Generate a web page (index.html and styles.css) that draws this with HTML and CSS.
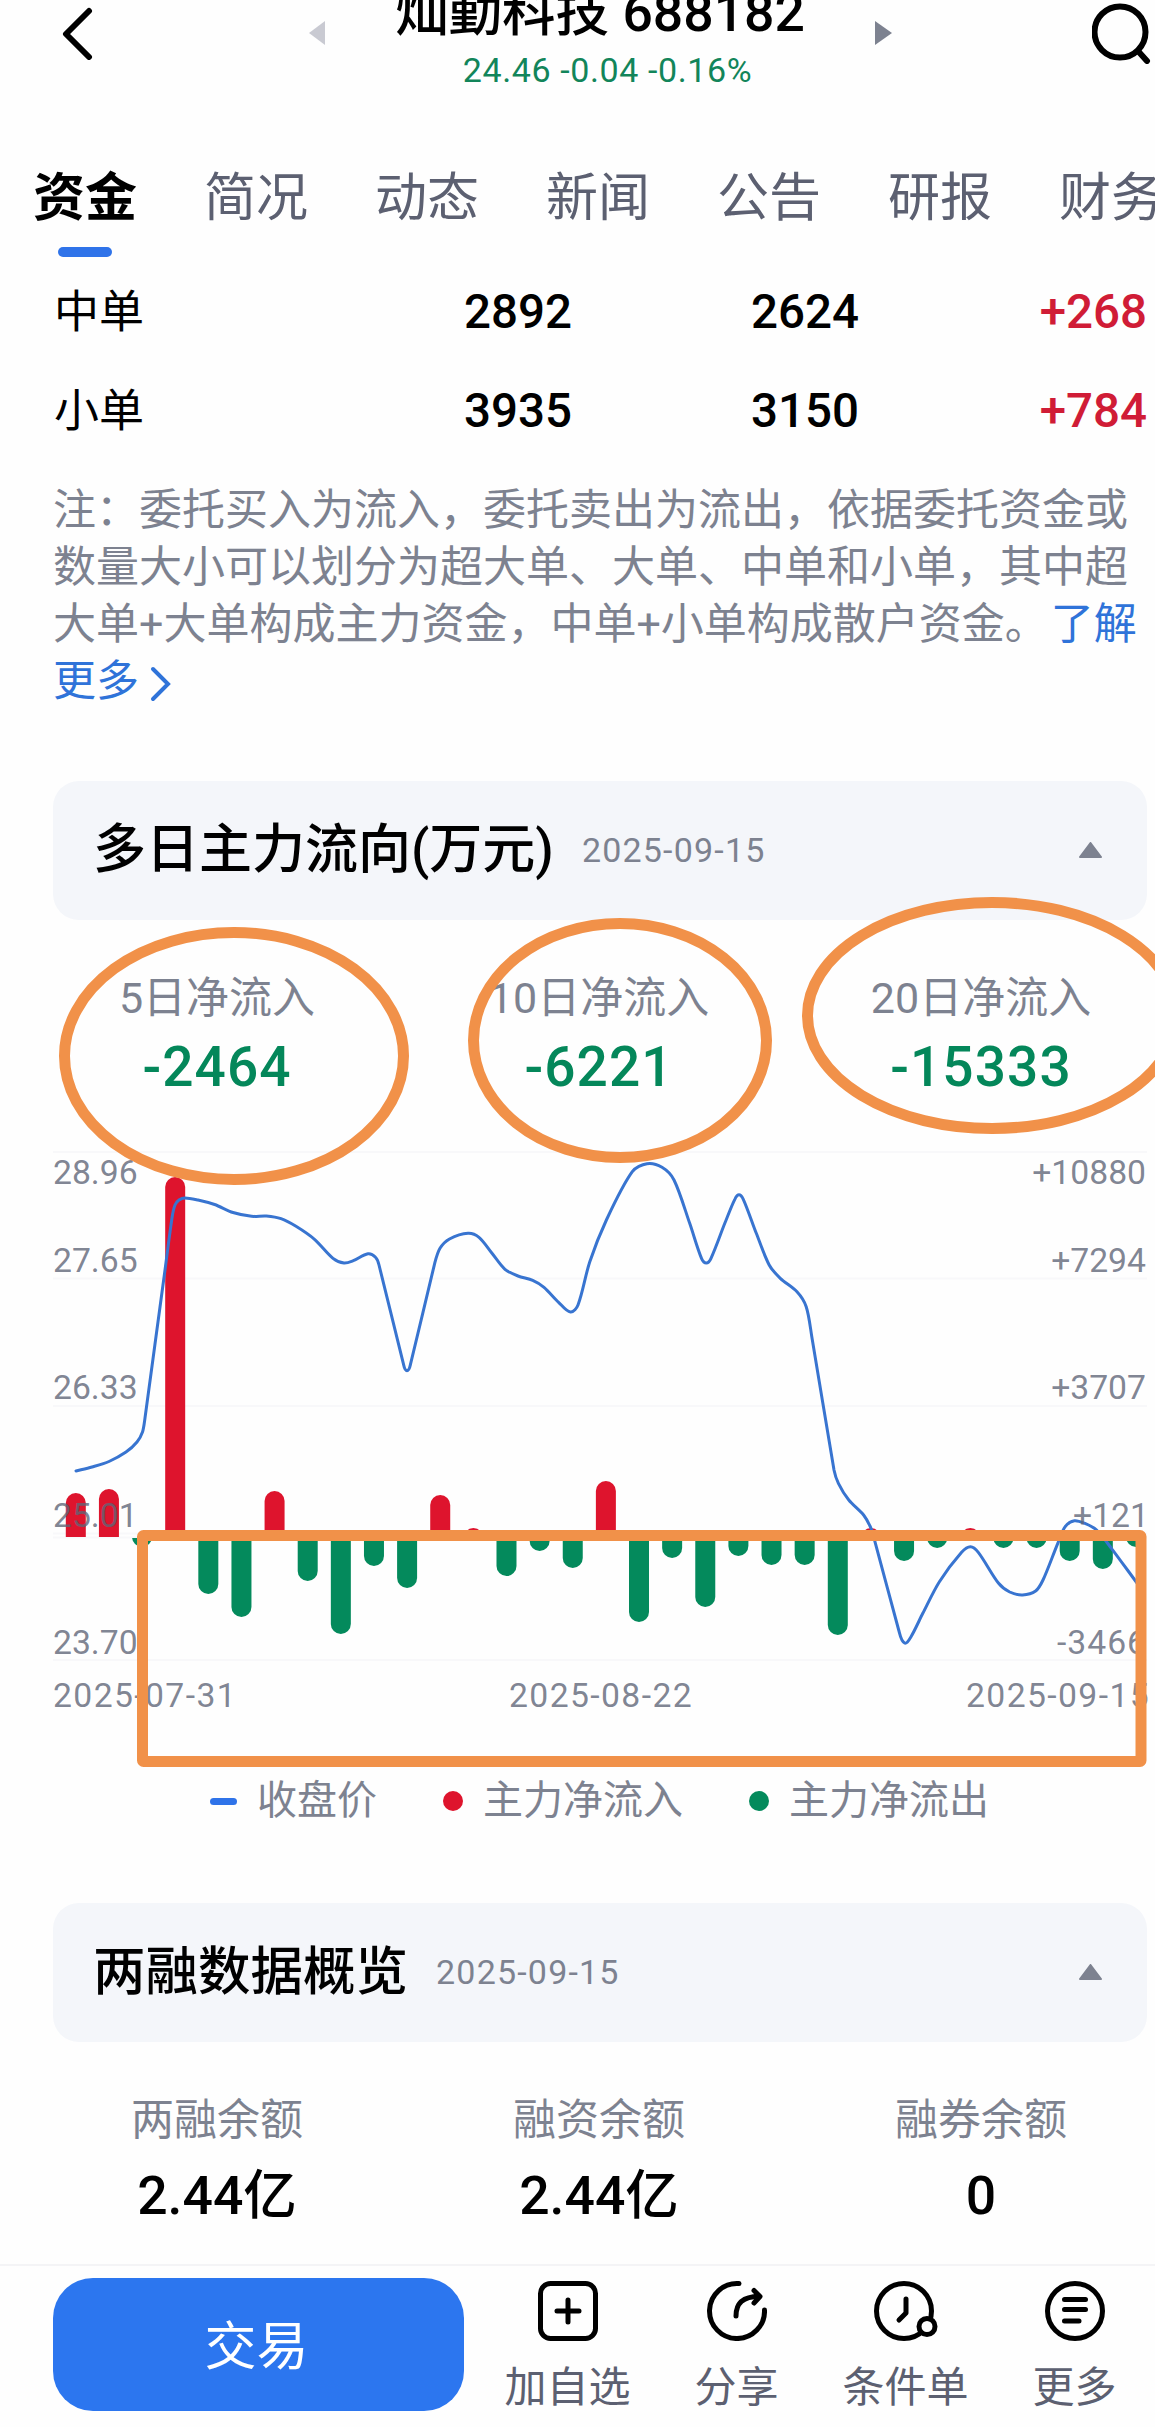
FILE: index.html
```html
<!DOCTYPE html>
<html lang="zh-CN">
<head>
    <meta charset="utf-8" />
    <title>灿勤科技 688182</title>
    <link rel="stylesheet" href="styles.css">
</head>
<body>
    <header class="topbar">
        <svg class="back" width="36" height="60" viewBox="0 0 36 60"><path d="M30 11 L7 34 L30 57" /></svg>
        <svg class="prev" width="16" height="24" viewBox="0 0 16 24"><path d="M16 0 V24 L0 12 Z" /></svg>
        <div class="stock">
            <h1>灿勤科技 688182</h1>
            <p>24.46 -0.04 -0.16%</p>
        </div>
        <svg class="next" width="17" height="24" viewBox="0 0 17 24"><path d="M0 0 V24 L17 12 Z" /></svg>
        <svg class="search" width="63" height="64" viewBox="0 0 63 64"><circle cx="28" cy="32" r="25.5" /><path d="M46 51 L55 61" /></svg>
    </header>

    <nav class="tabs">
        <a class="active">资金</a>
        <a>简况</a>
        <a>动态</a>
        <a>新闻</a>
        <a>公告</a>
        <a>研报</a>
        <a>财务</a>
    </nav>

    <main>
        <div class="orders">
            <div class="row"><span>中单</span><b>2892</b><b>2624</b><b class="up">+268</b></div>
            <div class="row"><span>小单</span><b>3935</b><b>3150</b><b class="up">+784</b></div>
        </div>

        <p class="note">注：委托买入为流入，委托卖出为流出，依据委托资金或<br>数量大小可以划分为超大单、大单、中单和小单，其中超<br>大单+大单构成主力资金，中单+小单构成散户资金。<a>了解<br>更多<svg width="22" height="36" viewBox="0 0 22 36"><path d="M3 3 L18 18 L3 33" /></svg></a></p>

        <section class="card-head">
            <h2>多日主力流向(万元)</h2>
            <time>2025-09-15</time>
            <svg width="23" height="16" viewBox="0 0 23 16"><path d="M11.5 1 L22 15 H1 Z" /></svg>
        </section>

        <div class="stats flow">
            <div><span>5日净流入</span><b>-2464</b></div>
            <div><span>10日净流入</span><b>-6221</b></div>
            <div><span>20日净流入</span><b>-15333</b></div>
        </div>

        <svg class="chart" width="1155" height="600" viewBox="0 1130 1155 600">
            <defs>
                <clipPath id="above"><rect x="0" y="1130" width="1155" height="407" /></clipPath>
                <clipPath id="below"><rect x="0" y="1538" width="1155" height="192" /></clipPath>
            </defs>
            <path class="grid" d="M53 1152H1147 M53 1278.5H1147 M53 1406H1147 M53 1533.5H1147 M53 1537.5H1147 M53 1660H1147" />
            <g id="inflow" class="inflow" clip-path="url(#above)"></g>
            <g id="outflow" class="outflow" clip-path="url(#below)"></g>
            <path id="price" class="price" />
            <g class="axis">
                <text x="53" y="1184">28.96</text>
                <text x="53" y="1272">27.65</text>
                <text x="53" y="1399">26.33</text>
                <text x="53" y="1527">25.01</text>
                <text x="53" y="1654">23.70</text>
            </g>
            <g class="axis end">
                <text x="1146" y="1184">+10880</text>
                <text x="1146" y="1272">+7294</text>
                <text x="1146" y="1399">+3707</text>
                <text x="1149" y="1527">+121</text>
                <text x="1146" y="1654" textLength="89">-3466</text>
            </g>
            <g class="axis dates">
                <text x="53" y="1707">2025-07-31</text>
                <text x="509" y="1707">2025-08-22</text>
                <text x="966" y="1707">2025-09-15</text>
            </g>
        </svg>

        <div class="legend">
            <span><i class="dash"></i>收盘价</span>
            <span><i class="dot red"></i>主力净流入</span>
            <span><i class="dot green"></i>主力净流出</span>
        </div>

        <section class="card-head second">
            <h2>两融数据概览</h2>
            <time>2025-09-15</time>
            <svg width="23" height="16" viewBox="0 0 23 16"><path d="M11.5 1 L22 15 H1 Z" /></svg>
        </section>

        <div class="stats margin">
            <div><span>两融余额</span><b>2.44亿</b></div>
            <div><span>融资余额</span><b>2.44亿</b></div>
            <div><span>融券余额</span><b>0</b></div>
        </div>
    </main>

    <footer class="bottombar">
        <button>交易</button>
        <a>
            <svg width="60" height="60" viewBox="0 0 60 60"><rect x="2.5" y="2.5" width="55" height="55" rx="10" /><path d="M30 19V41M19 30H41" /></svg>
            加自选
        </a>
        <a>
            <svg width="60" height="60" viewBox="0 0 60 60"><path d="M32 2.6A27.5 27.5 0 1 0 57.5 29M29 35C29 22 36 15.5 52 15.5M47 9.5L53 15.5L47 22" /></svg>
            分享
        </a>
        <a>
            <svg width="64" height="60" viewBox="0 0 64 60"><circle cx="30" cy="30" r="27.5" /><path d="M32 18V32L25 39" /><circle class="knob" cx="53" cy="45.5" r="8" /></svg>
            条件单
        </a>
        <a>
            <svg width="60" height="60" viewBox="0 0 60 60"><circle cx="30" cy="30" r="27.5" /><path d="M19.5 18.5H40.5M19.5 28.5H40.5M19.5 40H34" /></svg>
            更多
        </a>
    </footer>

    <!-- hand-drawn marks over the page -->
    <svg class="marks" width="1155" height="2427" viewBox="0 0 1155 2427">
        <ellipse cx="234" cy="1056" rx="169.5" ry="123.5" />
        <ellipse cx="620" cy="1040.5" rx="146.5" ry="117" />
        <ellipse cx="992" cy="1015.5" rx="184.5" ry="113" />
        <rect x="142.5" y="1535.5" width="998.5" height="226" rx="1" />
    </svg>

    <script src="chart.js"></script>
</body>
</html>
```

FILE: styles.css
```css
* {
    box-sizing: border-box;
}
body {
    margin: 0;
    width: 1155px;
    height: 2427px;
    overflow: hidden;
    position: relative;
    background: #fefefe;
    color: #000;
    font-family: Roboto, "Noto Sans CJK SC", sans-serif;
}
h1, h2, p {
    margin: 0;
}
svg {
    display: block;
    flex: none;
}

.topbar {
    display: flex;
    align-items: flex-start;
    height: 130px;
    padding-left: 59px;
    overflow: hidden;
}
.back, .search {
    fill: none;
    stroke: #000;
    stroke-width: 6;
    stroke-linecap: round;
    stroke-linejoin: round;
}
.prev {
    margin: 21px 0 0 214px;
    fill: #c9cad2;
}
.next {
    margin-top: 21px;
    fill: #7d8290;
}
.search {
    margin-left: 200px;
}
.stock {
    width: 550px;
    text-align: center;
    white-space: nowrap;
}
.stock h1 {
    margin-top: -17px;
    font-size: 53.5px;
    font-weight: 500;
    line-height: 60px;
}
.stock p {
    margin-top: 7px;
    padding-left: 15px;
    font-size: 34px;
    line-height: 40px;
    letter-spacing: 0.6px;
    color: #12855a;
}

.tabs {
    display: flex;
    gap: 67px;
    height: 127px;
    padding: 39px 0 0 33px;
    font-size: 52px;
    line-height: 60px;
    color: #5c6071;
    white-space: nowrap;
}
.tabs a {
    flex: none;
}
.tabs .active {
    color: #000;
    font-weight: 700;
}
.tabs .active::after {
    content: "";
    display: block;
    width: 54px;
    height: 10px;
    margin: 18px auto 0;
    border-radius: 5px;
    background: #2f73e9;
}

.orders {
    padding: 6px 8px 0 54px;
}
.orders .row {
    display: grid;
    grid-template-columns: 230px 288px 287px 288px;
    height: 99px;
    line-height: 98px;
    font-size: 45px;
    text-align: right;
}
.orders span {
    text-align: left;
    line-height: 100px;
}
.orders b {
    font-size: 47.5px;
    font-weight: 500;
}
.up {
    color: #d01c36;
}

.note {
    margin: 21px 0 0 53px;
    font-size: 43px;
    line-height: 57px;
    color: #7d8290;
    white-space: nowrap;
}
.note a {
    margin-left: 3px;
    color: #2f73d9;
}
.note svg {
    display: inline-block;
    vertical-align: -6px;
    margin-left: 11px;
    fill: none;
    stroke: #2f73d9;
    stroke-width: 4;
    stroke-linecap: round;
}

.card-head {
    display: flex;
    align-items: center;
    height: 139px;
    margin: 71px 8px 0 53px;
    padding: 0 45px 2px 40px;
    border-radius: 26px;
    background: #f4f6fa;
}
.card-head h2 {
    font-size: 53px;
    font-weight: 500;
    line-height: 60px;
}
.card-head time {
    margin-left: 28px;
    font-size: 34px;
    letter-spacing: 1.2px;
    color: #7d8290;
}
.card-head svg {
    margin-left: auto;
    fill: #7d8290;
    stroke: #7d8290;
    stroke-width: 2;
    stroke-linejoin: round;
}

.stats {
    display: grid;
    grid-template-columns: repeat(3, 382px);
    margin-left: 26px;
    text-align: center;
}
.stats span, .stats b {
    display: block;
}
.stats span {
    font-size: 43px;
    line-height: 60px;
    color: #7d8290;
}
.stats b {
    margin-top: 8px;
    font-size: 55px;
    font-weight: 500;
    line-height: 60px;
}
.flow {
    height: 210px;
    padding-top: 48px;
}
.flow b {
    padding-top: 1px;
    color: #04875a;
    letter-spacing: 1.1px;
}
.margin {
    height: 222px;
    padding-top: 48px;
}
.margin b {
    margin-top: 16px;
    font-size: 53.5px;
}

.grid {
    stroke: #f8f8fa;
    stroke-width: 2;
}
.inflow {
    fill: #de142d;
}
.outflow {
    fill: #048a5c;
}
.price {
    fill: none;
    stroke: #3874d0;
    stroke-width: 3;
    stroke-linecap: round;
    stroke-linejoin: round;
}
.axis {
    fill: #5f6577;
    fill-opacity: 0.8;
    font-size: 33.7px;
}
.end {
    text-anchor: end;
}
.dates {
    letter-spacing: 1.4px;
}

.legend {
    display: flex;
    align-items: flex-start;
    height: 173px;
    padding: 41px 0 0 210px;
    font-size: 40px;
    line-height: 60px;
    color: #7d8290;
    white-space: nowrap;
}
.legend span {
    display: flex;
    align-items: center;
}
.legend i {
    display: block;
    border-radius: 10px;
}
.dash {
    width: 27px;
    height: 7px;
    margin-right: 20px;
    background: #2f73e9;
}
.dot {
    width: 20px;
    height: 20px;
    margin: 0 20px 0 66px;
}
.red {
    background: #de142d;
}
.green {
    background: #048a5c;
}
.second {
    margin-top: 0;
}
.second h2 {
    font-size: 52.5px;
}

.bottombar {
    display: flex;
    height: 163px;
    padding: 12px 0 0 53px;
    border-top: 2px solid #f4f4f6;
    color: #5c6071;
    font-size: 42px;
    line-height: 60px;
    white-space: nowrap;
}
.bottombar button {
    flex: none;
    width: 411px;
    height: 133px;
    margin-right: 19px;
    padding: 0 4px 5px 0;
    border: 0;
    border-radius: 40px;
    background: #2c76ef;
    color: #fff;
    font-family: inherit;
    font-size: 52px;
}
.bottombar a {
    display: flex;
    flex-direction: column;
    align-items: center;
    gap: 17px;
    flex: none;
    width: 169px;
    padding-top: 3px;
}
.bottombar svg {
    fill: none;
    stroke: #000;
    stroke-width: 5;
    stroke-linecap: round;
    stroke-linejoin: round;
}
.bottombar .knob {
    fill: #fefefe;
}

.marks {
    position: absolute;
    top: 0;
    left: 0;
    fill: none;
    stroke: #f19149;
    stroke-width: 11;
}
```

FILE: chart.js
```js
// end of each daily bar on the y axis; smaller than the zero line means inflow
const ZERO = 1537;
const bars = [
    1493, 1489, 1547, 1177, 1594, 1617, 1491, 1581, 1634, 1566, 1588,
    1495, 1528, 1576, 1551, 1568, 1481, 1622, 1558, 1607, 1556, 1565,
    1565, 1635, 1528, 1561, 1548, 1528, 1548, 1548, 1561, 1569, 1547
];

const price = [
    [76, 1471], [92, 1467], [109, 1461.5], [126, 1452], [137, 1442], [142.5, 1432], [145, 1418],
    [164.6, 1273], [172, 1218], [175, 1205], [179, 1200], [185, 1198], [198, 1200], [214.6, 1204.5],
    [233, 1212.5], [251.6, 1216.3], [266.4, 1216], [281, 1218.7], [296, 1226.3], [314.5, 1239.3],
    [333, 1258.3], [344, 1263], [353.3, 1260.7], [368, 1253.7], [375.5, 1257.3], [379, 1265],
    [403.3, 1363.3], [407, 1370.7], [410.7, 1363.3], [434.7, 1263.3], [440, 1248.3], [449.5, 1239],
    [468, 1233.3], [479, 1237.3], [492, 1253.3], [505, 1269.3], [518, 1276], [532.7, 1280.3],
    [544, 1287.3], [558.6, 1302.3], [570.5, 1312], [578, 1305], [589.8, 1261.7], [606.4, 1220],
    [632.3, 1171.7], [647, 1163.7], [662, 1167.3], [674, 1180], [689.7, 1223.3], [701.5, 1258.3],
    [706.3, 1263], [711, 1258.3], [724.8, 1223.3], [734.8, 1199.3], [739, 1194.7], [743.3, 1199.3],
    [756.3, 1233.3], [769.2, 1265], [780.3, 1278.3], [797, 1291.7], [806.2, 1306.7], [811.8, 1336.7],
    [834, 1470], [838.4, 1483.3], [848.8, 1500], [863.6, 1515], [871, 1528.3], [875.4, 1543.3],
    [898.7, 1630], [904.6, 1643], [911, 1636.7], [922.8, 1613.3], [939.4, 1581.7], [961.6, 1552.3],
    [970.5, 1546.7], [978.3, 1552.3], [998.6, 1583.3], [1009.7, 1592], [1022.6, 1595], [1035.6, 1591],
    [1043, 1580], [1057.8, 1543.3], [1065.2, 1526.7], [1074.4, 1520.7], [1085.5, 1523.7],
    [1096.6, 1530], [1111.4, 1548.3], [1137, 1583]
];

bars.forEach((end, i) => {
    const up = end < ZERO;
    const rect = document.createElementNS('http://www.w3.org/2000/svg', 'rect');
    rect.setAttribute('x', 75.8 + i * 33.13 - 10);
    rect.setAttribute('y', up ? end : ZERO - 30);
    rect.setAttribute('width', 20);
    rect.setAttribute('height', up ? ZERO + 30 - end : end - ZERO + 30);
    rect.setAttribute('rx', 10);
    document.getElementById(up ? 'inflow' : 'outflow').appendChild(rect);
});

// control points are scaled by segment length, so short bends don't overshoot
function smooth(pts) {
    const dist = (a, b) => Math.hypot(a[0] - b[0], a[1] - b[1]);
    const tangent = (i) => {
        const a = pts[Math.max(i - 1, 0)];
        const b = pts[Math.min(i + 1, pts.length - 1)];
        const len = dist(a, b);
        return [(b[0] - a[0]) / len, (b[1] - a[1]) / len];
    };
    let d = 'M' + pts[0].join(' ');
    for (let i = 0; i < pts.length - 1; i++) {
        const k = dist(pts[i], pts[i + 1]) * (dist(pts[i], pts[i + 1]) > 60 ? 0.08 : 0.3);
        const t0 = tangent(i);
        const t1 = tangent(i + 1);
        d += ' C' + [
            pts[i][0] + t0[0] * k, pts[i][1] + t0[1] * k,
            pts[i + 1][0] - t1[0] * k, pts[i + 1][1] - t1[1] * k,
            pts[i + 1][0], pts[i + 1][1]
        ].map((n) => n.toFixed(1)).join(' ');
    }
    return d;
}

document.getElementById('price').setAttribute('d', smooth(price));
```
